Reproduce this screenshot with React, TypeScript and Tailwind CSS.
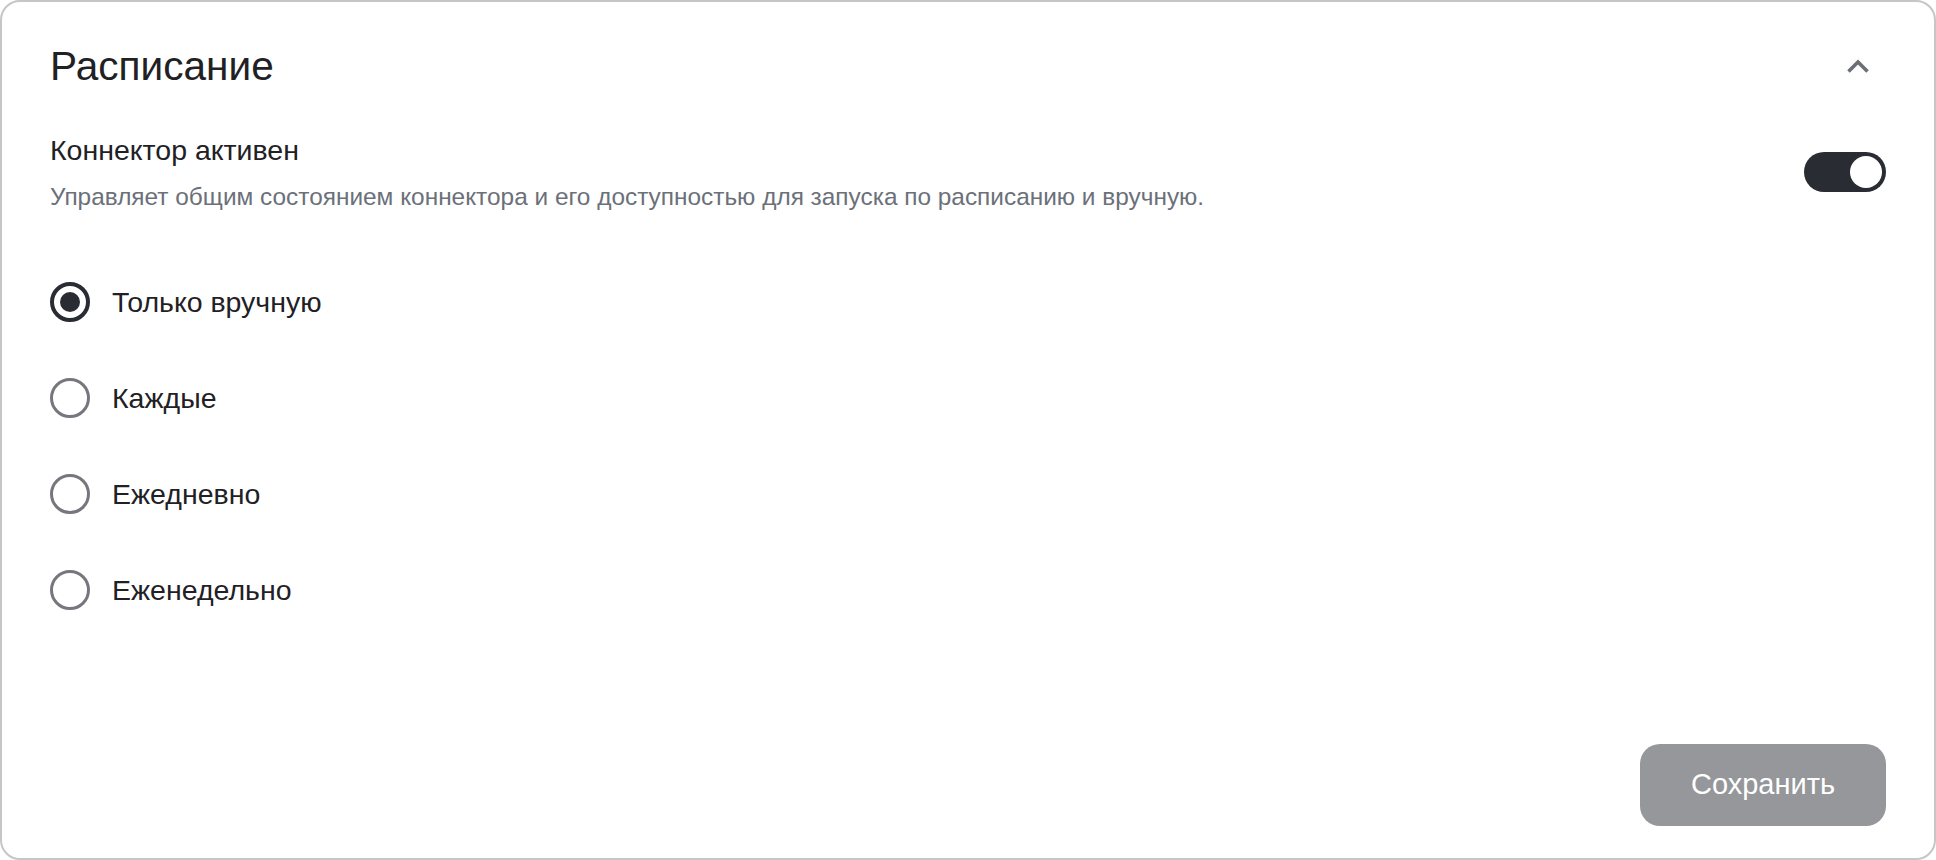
import { useState } from "react";

const options = ["Только вручную", "Каждые", "Ежедневно", "Еженедельно"];

const ChevronUp = () => (
    <svg width="24" height="16" viewBox="0 0 24 16" fill="none" className="text-[#6b6f76]">
        <path d="M2.5 13.5 L12 4 L21.5 13.5" stroke="currentColor" strokeWidth="3.6" strokeLinecap="butt" strokeLinejoin="miter" />
    </svg>
);

const Toggle = ({ on, onChange }: { on: boolean; onChange: () => void }) => (
    <button
        onClick={onChange}
        className={`relative flex h-[40px] w-[82px] shrink-0 items-center rounded-full px-[4px] ${on ? "justify-end bg-[#2a2c33]" : "justify-start bg-[#c4c6cc]"}`}
    >
        <span className="block h-[32px] w-[32px] rounded-full bg-white" />
    </button>
);

const Radio = ({ label, checked, onSelect }: { label: string; checked: boolean; onSelect: () => void }) => (
    <label className="flex h-[40px] cursor-pointer items-center gap-[22px]" onClick={onSelect}>
        {checked ? (
            <span className="flex h-[40px] w-[40px] items-center justify-center rounded-full border-[4px] border-[#2a2c33]">
                <span className="block h-[20px] w-[20px] rounded-full bg-[#2a2c33]" />
            </span>
        ) : (
            <span className="block h-[40px] w-[40px] rounded-full border-[3.5px] border-[#76777e]" />
        )}
        <span className="text-[28.5px] leading-[40px] text-[#1f2125]">{label}</span>
    </label>
);

export default function App() {
    const [active, setActive] = useState(true);
    const [mode, setMode] = useState(0);

    return (
        <div className="bg-white font-['Liberation_Sans',Arial,sans-serif]">
            <div className="flex h-[860px] w-full flex-col rounded-[20px] border-2 border-[#c6c6c6] bg-white px-[48px] pb-[32px] pt-[40px]">
                <div className="flex h-[48px] items-center justify-between">
                    <h1 className="text-[40.6px] leading-[48px] font-normal text-[#1f2125]">Расписание</h1>
                    <button className="mr-[16px] flex items-center justify-center">
                        <ChevronUp />
                    </button>
                </div>

                <div className="mt-[42px] flex items-center justify-between">
                    <div>
                        <div className="text-[28.5px] leading-[36px] text-[#1f2125]">Коннектор активен</div>
                        <div className="mt-[14px] text-[24.4px] leading-[30px] text-[#6b7079]">
                            Управляет общим состоянием коннектора и его доступностью для запуска по расписанию и вручную.
                        </div>
                    </div>
                    <Toggle on={active} onChange={() => setActive(!active)} />
                </div>

                <div className="mt-[70px] flex flex-col gap-[56px]">
                    {options.map((o, i) => (
                        <Radio key={o} label={o} checked={mode === i} onSelect={() => setMode(i)} />
                    ))}
                </div>

                <div className="mt-auto flex justify-end">
                    <button className="h-[82px] w-[246px] rounded-[20px] bg-[#95979a] text-[29px] text-white">
                        Сохранить
                    </button>
                </div>
            </div>
        </div>
    );
}
